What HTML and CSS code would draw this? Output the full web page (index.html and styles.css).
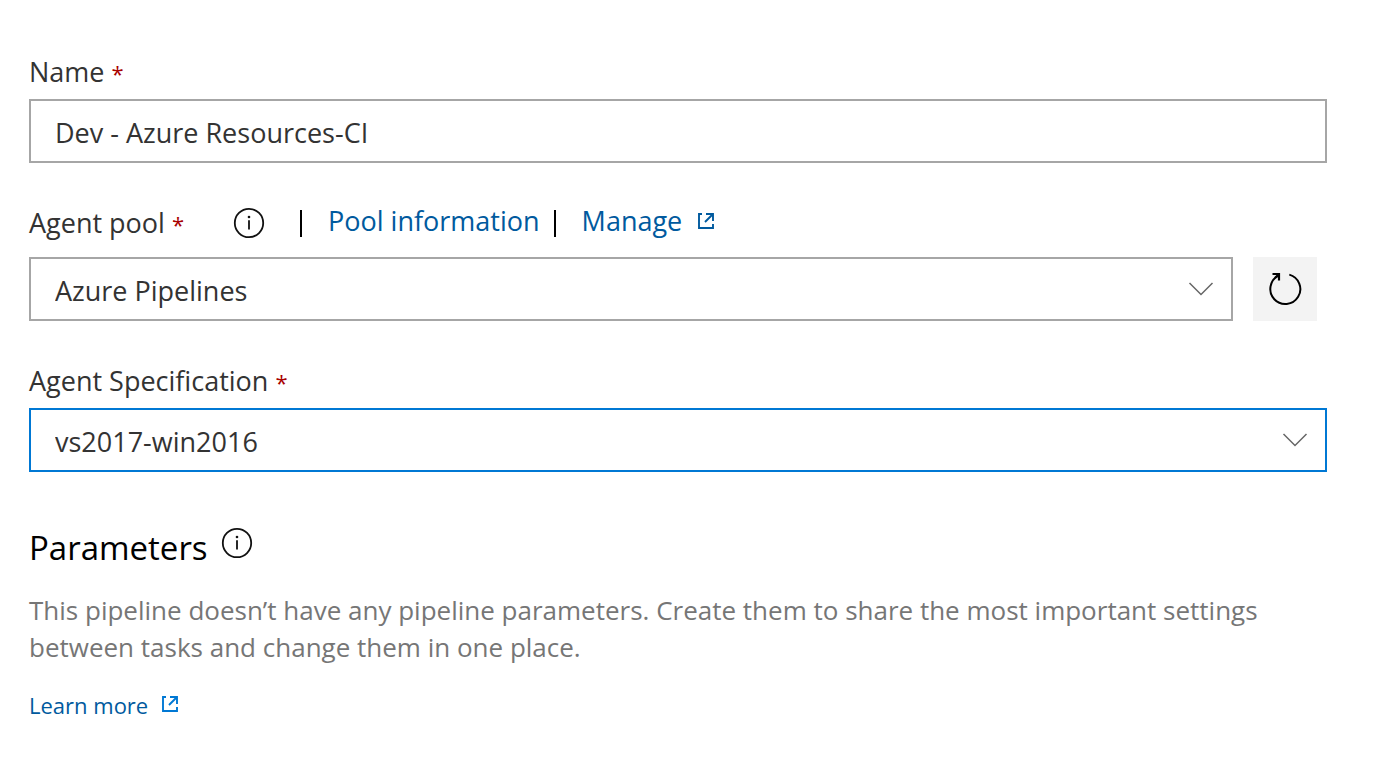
FILE: index.html
```html
<!DOCTYPE html>
<html lang="en">
<head>
<meta charset="utf-8">
<title>Pipeline</title>
<link rel="stylesheet" href="styles.css">
</head>
<body>
<svg class="defs" aria-hidden="true">
  <symbol id="info" viewBox="0 0 32 32"><circle cx="16" cy="16" r="14.2" fill="none" stroke="currentColor" stroke-width="1.8"/><path d="M16 13.3V22.5" stroke="currentColor" stroke-width="1.8"/><circle cx="16" cy="10" r="1.3" fill="currentColor"/></symbol>
  <symbol id="external" viewBox="0 0 18 18"><path d="M5 2H2V16H16V12M9 2H16V9M16 2L8 10" fill="none" stroke="currentColor" stroke-width="1.900"/></symbol>
  <symbol id="chevron" viewBox="0 0 26 14"><path d="M1.500 1L13 12.500L24.500 1" fill="none" stroke="currentColor" stroke-width="1.500"/></symbol>
</svg>
<main class="pipeline">
  <form class="form">
    <div class="field">
      <label class="label" for="name">Name <span class="required">*</span></label>
      <input class="control" id="name" type="text" value="Dev - Azure Resources-CI" required>
    </div>
    <div class="field field-pool">
      <div class="label-row">
        <label class="label" for="pool">Agent pool <span class="required">*</span></label>
        <button class="info" type="button" aria-label="About agent pools"><svg><use href="#info"/></svg></button>
        <nav class="links">
          <a class="link pool-link" href="#pool-information">Pool information</a>
          <a class="link manage-link" href="#manage">Manage <svg class="external"><use href="#external"/></svg></a>
        </nav>
      </div>
      <div class="pool-row">
        <div class="select">
          <select class="control" id="pool"><option>Azure Pipelines</option></select>
          <svg class="chevron"><use href="#chevron"/></svg>
        </div>
        <button class="refresh" type="button" aria-label="Refresh">
          <svg viewBox="0 0 34 34"><path d="M21.300 2.600A15 15 0 1 1 10.500 3.700" fill="none" stroke="currentColor" stroke-width="2"/><path d="M4.500 2H11V8.500M11 2L7 6" fill="none" stroke="currentColor" stroke-width="2.200"/></svg>
        </button>
      </div>
    </div>
    <div class="field">
      <label class="label" for="spec">Agent Specification <span class="required">*</span></label>
      <div class="select">
        <select class="control active" id="spec"><option>vs2017-win2016</option></select>
        <svg class="chevron"><use href="#chevron"/></svg>
      </div>
    </div>
  </form>
  <section class="parameters">
    <div class="heading">
      <h2 class="title">Parameters</h2>
      <button class="info" type="button" aria-label="About parameters"><svg><use href="#info"/></svg></button>
    </div>
    <p class="description">This pipeline doesn’t have any pipeline parameters. Create them to share the most important settings between tasks and change them in one place.</p>
    <a class="link learn" href="#learn-more">Learn more <svg class="external bright"><use href="#external"/></svg></a>
  </section>
</main>
</body>
</html>
```
FILE: styles.css
```css
* { box-sizing: border-box; }

body {
  margin: 0;
  background: #fff;
  color: #333;
  font: 27px/39px "Open Sans", "Noto Sans", sans-serif;
}

.defs { position: absolute; width: 0; height: 0; }

.pipeline { padding: 52px 46px 40px 29px; }

.form { display: flex; flex-direction: column; gap: 40px; }

.field { display: flex; flex-direction: column; gap: 8px; }

.field-pool { gap: 15px; }

.required { color: #a80000; font-size: 22px; line-height: 1; }

.control {
  display: block;
  width: 100%;
  height: 64px;
  padding: 2px 24px 0;
  border: 2px solid #a6a6a6;
  border-radius: 0;
  background: #fff;
  color: #333;
  font: inherit;
  appearance: none;
  outline: none;
}

.control.active, .control:focus { border-color: #0078d4; }

.select { position: relative; flex: 1; }

.chevron {
  position: absolute;
  top: 25px;
  right: 19px;
  width: 26px;
  height: 14px;
  color: #666;
  pointer-events: none;
}

.label-row { display: flex; align-items: center; }

.info {
  display: flex;
  padding: 0;
  border: 0;
  background: none;
  color: #111;
}

.info svg { width: 32px; height: 32px; }

.label-row .info { margin-left: 49px; }

.links { display: flex; align-items: center; margin-bottom: 4px; line-height: 35px; }

.link {
  display: flex;
  align-items: center;
  color: #005a9e;
  text-decoration: none;
}

.pool-link::before, .manage-link::before {
  width: 2px;
  height: 27px;
  background: #000;
  content: "";
}

.pool-link::before { margin: 6px 26px 0 35px; }

.manage-link::before { margin: 6px 26px 0 14px; }

.external { width: 18px; height: 18px; margin-left: 15px; }

.bright { color: #0078d4; margin: 0 0 2px 13px; }

.pool-row { display: flex; gap: 20px; padding-right: 10px; }

.refresh {
  display: grid;
  place-items: center;
  width: 64px;
  height: 64px;
  padding: 0;
  border: 0;
  background: #f3f3f3;
  color: #000;
}

.refresh svg { width: 34px; height: 34px; }

.parameters { margin-top: 52px; }

.heading { display: flex; align-items: center; gap: 13px; }

.heading .info { margin-bottom: 10px; }

.title {
  margin: 0;
  color: #000;
  font-size: 33px;
  font-weight: 400;
  line-height: 48px;
}

.description { margin: 20px 0 19px; color: #767676; font-size: 26px; line-height: 37px; }

.learn { font-size: 22px; line-height: 40px; }
```
